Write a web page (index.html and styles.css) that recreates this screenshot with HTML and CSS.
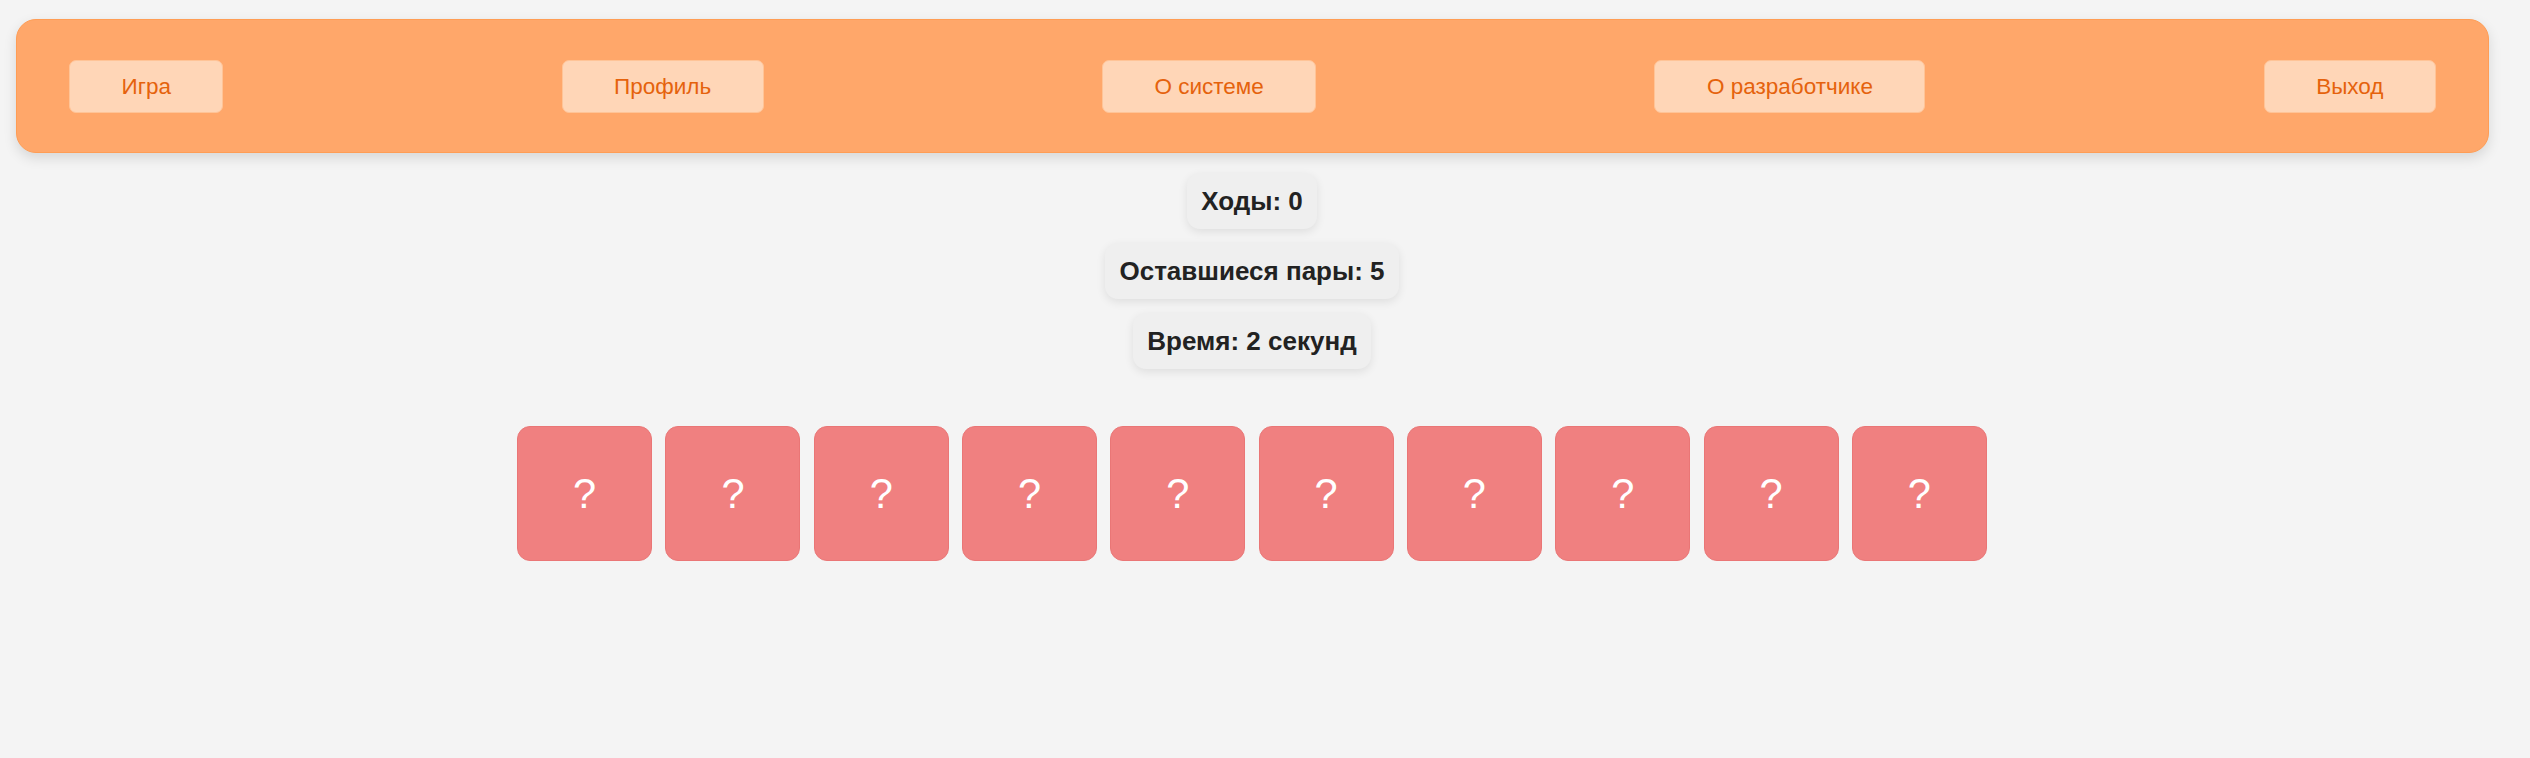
FILE: index.html
```html
<!DOCTYPE html>
<html lang="ru">
<head>
<meta charset="utf-8">
<title>Игра</title>
<link rel="stylesheet" href="styles.css">
</head>
<body>
<div class="page">
  <header class="nav">
    <button class="nav-btn">Игра</button>
    <button class="nav-btn">Профиль</button>
    <button class="nav-btn">О системе</button>
    <button class="nav-btn">О разработчике</button>
    <button class="nav-btn">Выход</button>
  </header>
  <section class="stats">
    <div class="stat">Ходы: 0</div>
    <div class="stat">Оставшиеся пары: 5</div>
    <div class="stat">Время: 2 секунд</div>
  </section>
  <section class="board">
    <div class="card">?</div>
    <div class="card">?</div>
    <div class="card">?</div>
    <div class="card">?</div>
    <div class="card">?</div>
    <div class="card">?</div>
    <div class="card">?</div>
    <div class="card">?</div>
    <div class="card">?</div>
    <div class="card">?</div>
  </section>
</div>
</body>
</html>
```

FILE: styles.css
```css
html, body {
  margin: 0;
  padding: 0;
  background: #f4f4f4;
}

body {
  font-family: "Liberation Sans", Arial, sans-serif;
  height: 758px;
  overflow: hidden;
}

.page {
  width: 2504px;
  padding-top: 19px;
}

.nav {
  margin: 0 15px 0 16px;
  height: 134px;
  box-sizing: border-box;
  padding: 0 52px;
  display: flex;
  align-items: center;
  justify-content: space-between;
  background: #ffa76a;
  border: 1px solid #ff9d55;
  border-radius: 20px;
  box-shadow: 0 5px 13px rgba(0, 0, 0, 0.12);
}

.nav-btn {
  font-family: "Liberation Sans", Arial, sans-serif;
  font-size: 22.5px;
  line-height: 26px;
  color: #e5620c;
  background: #ffd6b7;
  border: 1px solid #ffc497;
  border-radius: 7px;
  padding: 13px 51.5px 12px;
  margin: 0;
  cursor: pointer;
}

.stats {
  margin-top: 20px;
  display: flex;
  flex-direction: column;
  align-items: center;
  gap: 14px;
}

.stat {
  font-size: 26px;
  line-height: 30px;
  font-weight: bold;
  color: #222222;
  background: #efefef;
  padding: 13px 14px 13px;
  border-radius: 13px;
  box-shadow: 0 3px 10px rgba(0, 0, 0, 0.09);
}

.board {
  margin-top: 57px;
  display: flex;
  justify-content: center;
  gap: 13.3px;
}

.card {
  width: 135px;
  height: 135px;
  box-sizing: border-box;
  background: #f08080;
  border: 1px solid #ea7676;
  border-radius: 13px;
  display: flex;
  align-items: center;
  justify-content: center;
  color: #ffffff;
  font-size: 41.6px;
}
```
